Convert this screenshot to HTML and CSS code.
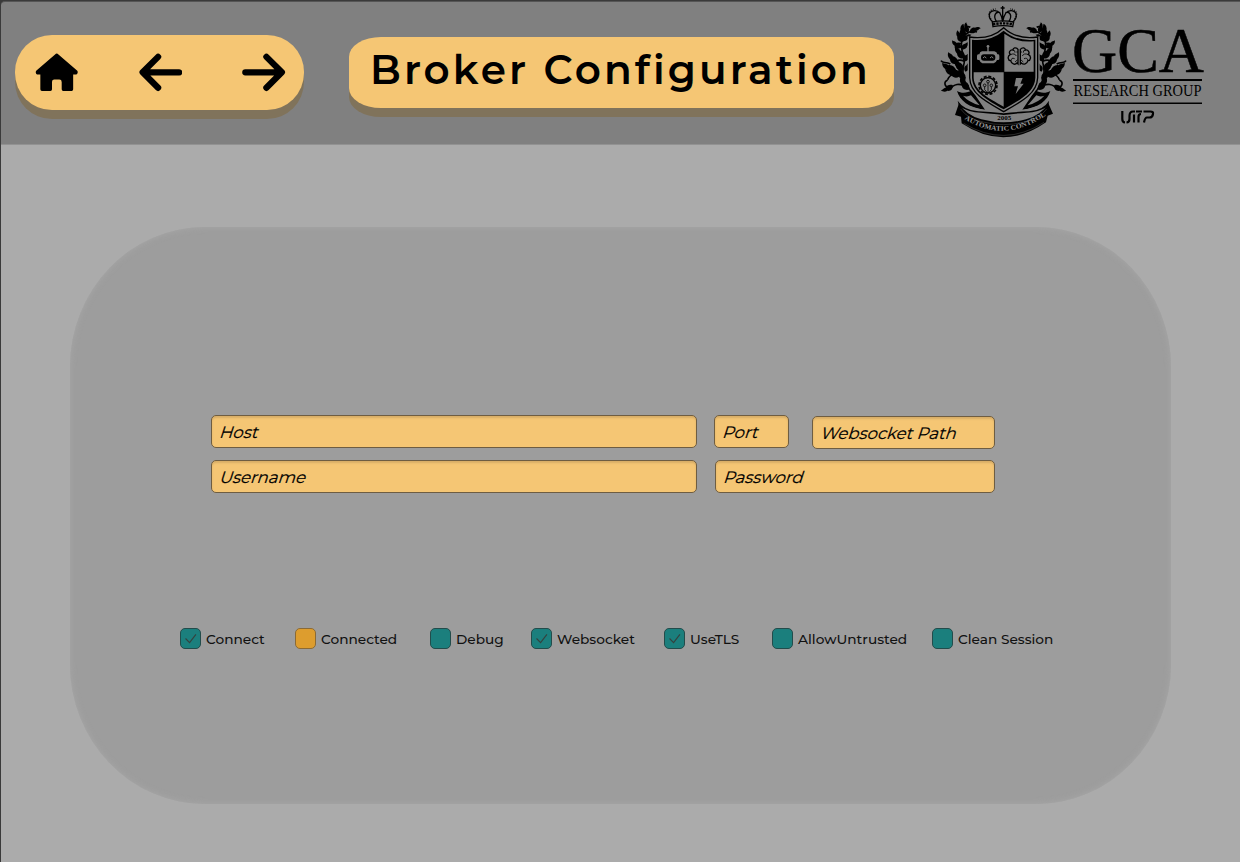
FILE: index.html
```html
<!DOCTYPE html>
<html lang="en">
<head>
<meta charset="utf-8">
<title>Broker Configuration</title>
<link rel="stylesheet" href="styles.css">
</head>
<body>
<div class="app">
<header class="header">
  <nav class="nav">
    <svg class="nav-icon" viewBox="0 0 44 44"><path d="M20.300 4.200Q22 2.600 23.700 4.200L42.500 20.500C44 22 43 24.600 41 24.600H38.600V39.500Q38.600 41.200 37 41.200H28.600Q27 41.200 27 39.500V32Q27 29.600 24.600 29.600H19.500Q17.200 29.600 17.200 32V39.500Q17.200 41.200 15.600 41.200H7Q5.400 41.200 5.400 39.500V24.600H3C1 24.600 0 22 1.500 20.500Z"/></svg>
    <svg class="nav-icon line" viewBox="0 0 44 44"><path d="M40.600 22.300H4M19.300 6.700L3.700 22.300L19.300 38"/></svg>
    <svg class="nav-icon line" viewBox="0 0 44 44"><path d="M3.400 22.300H40M24.700 6.700L40.300 22.300L24.700 38"/></svg>
  </nav>
  <h1 class="title"><span>Broker Configuration</span></h1>
  <svg class="crest" viewBox="0 0 405 435">
    <defs>
      <path id="leaf" d="M0 0C-6 -7 -3 -17 5 -19C8 -24 14 -27 20 -25C16 -21 18 -17 13 -14C13 -6 7 -2 0 0Z"/>
      <path id="motto" d="M88 357Q205 432 330 348"/>
      <g id="wing">
        <path class="stroke s5" d="M112 278C88 253 80 222 86 195C95 170 74 155 80 126C84 104 104 88 126 96M88 184C68 174 54 188 66 199M81 133C61 124 57 142 67 151M93 106C81 92 93 75 106 82M91 235C65 213 44 223 38 239M102 264C73 245 54 253 45 269M38 240C24 246 30 262 41 261M46 192C32 184 23 191 18 182"/>
        <use href="#leaf" transform="translate(85 125) rotate(-65) scale(1.200)"/>
        <use href="#leaf" transform="translate(88 113) rotate(-42) scale(1.300)"/>
        <use href="#leaf" transform="translate(100 98) rotate(-50)"/>
        <use href="#leaf" transform="translate(105 99) rotate(28) scale(1.100)"/>
        <use href="#leaf" transform="translate(84 124) rotate(14)"/>
        <use href="#leaf" transform="translate(80 142) rotate(-92) scale(1.100)"/>
        <use href="#leaf" transform="translate(82 149) rotate(10)"/>
        <use href="#leaf" transform="translate(91 173) rotate(-79) scale(1.400)"/>
        <use href="#leaf" transform="translate(86 185) rotate(8) scale(1.100)"/>
        <use href="#leaf" transform="translate(70 190) rotate(-80) scale(1.400)"/>
        <use href="#leaf" transform="translate(86 210) rotate(-74) scale(1.400)"/>
        <use href="#leaf" transform="translate(64 211) rotate(-100) scale(1.500)"/>
        <use href="#leaf" transform="translate(80 222) rotate(-112) scale(1.600)"/>
        <use href="#leaf" transform="translate(91 240) rotate(-62) scale(1.300)"/>
        <use href="#leaf" transform="translate(92 215) rotate(-8)"/>
        <use href="#leaf" transform="translate(104 268) rotate(-75) scale(1.400)"/>
        <use href="#leaf" transform="translate(53 255) rotate(-153) scale(1.200)"/>
      </g>
    </defs>
    <g class="stroke s4">
      <path d="M174 66C158 54 159 34 178 32C192 31 200 43 203 65C207 43 215 31 229 32C248 34 248 54 233 66M184 64C174 48 181 33 196 38M222 64C232 48 226 33 211 38M203 18V62M197 24H209"/>
      <path stroke-dasharray="3 4" d="M168 57C154 38 168 27 182 27M239 57C253 38 239 27 225 27"/>
      <path d="M172 66Q204 59 236 66L233 80Q204 74 174 80Z"/>
    </g>
    <path class="stroke s7" stroke-dasharray="7 3" d="M174 73Q204 67 234 73"/>
    <use href="#wing"/>
    <use href="#wing" transform="translate(411 0) scale(-1 1)"/>
    <path d="M66 273C75 302 100 323 150 329L124 290L112 270C96 281 78 280 66 273ZM346 273C337 302 312 323 262 329L288 290L300 270C316 281 334 280 346 273Z"/>
    <path class="ground" d="M84 287Q96 292 108 286L134 316Q100 306 84 287ZM328 287Q316 292 304 286L278 316Q312 306 328 287Z"/>
    <path class="ground" d="M95 315Q150 336 206 334Q262 336 317 315L322 340Q255 372 206 372Q157 372 90 340Z"/>
    <path d="M68 302Q86 330 130 334Q165 335 206 340Q247 335 282 334Q326 330 342 302L340 318Q310 338 275 338Q247 340 206 345Q165 340 137 338Q102 338 72 318Z"/>
    <path d="M72 310Q93 346 139 358Q206 376 273 358Q319 346 340 310L354 341L338 347L333 367Q207 455 80 370L78 350L60 345Z"/>
    <path class="stroke glint2" d="M77 327Q98 357 145 366Q206 382 267 366Q314 357 335 327M86 370Q207 444 327 367"/>
    <path class="ground" d="M98 109Q165 121 206 80Q247 121 314 109V234C313 286 259 310 206 340C153 310 99 286 98 234Z"/>
    <path class="stroke s3" d="M104 111Q167 120 206 83Q245 120 308 111V233C306 282 257 306 206 335C155 306 106 282 104 233Z"/>
    <path d="M111 119Q168 125 206 92Q244 125 301 119V233C299 278 253 300 206 328C159 300 113 278 111 233Z"/>
    <path class="ground" d="M208 101Q246 129 296 124V215H208ZM116 217H206V320C159 293 118 273 116 233Z"/>
    <g class="ground">
      <circle cx="159" cy="139" r="4"/><path d="M157 140H161V154H178Q186 155 187 163H190Q193 164 193 168V176Q193 180 189 180H186Q183 188 176 190H142Q136 188 133 180H130Q126 180 126 176V168Q126 164 130 163H133Q134 155 141 154H157Z"/>
      <path d="M243 234H263L256 251H266L242 282L249 259H238Z"/>
    </g>
    <rect x="138" y="163" width="43" height="19" rx="9"/><path class="glint" d="M144 174Q149 166 154 174M165 174Q170 166 175 174"/>
    <g class="stroke s2">
      <path class="s3" d="M249 148C242 140 234 144 234 150C225 148 220 158 226 163C215 169 220 183 227 182C229 192 240 196 246 189L249 192ZM256 148C263 140 271 144 271 150C280 148 285 158 280 163C291 169 286 183 279 182C276 192 266 196 259 189L256 192Z"/>
      <path d="M234 151Q241 150 240 158M226 164Q239 158 244 168M229 181Q228 172 239 176M240 186L248 179M271 151Q264 150 265 158M280 164Q267 158 262 168M278 181Q278 172 267 176M265 186L257 179M249 156H244M257 156H261"/>
      <circle cx="159" cy="256" r="23"/><path d="M159 249V279M149 260V269L156 277M169 260V269L162 277"/><circle cx="159" cy="245" r="4"/><circle cx="149" cy="256" r="4"/><circle cx="169" cy="256" r="4"/>
    </g>
    <circle class="stroke s5" stroke-dasharray="9 5.140" cx="159" cy="256" r="27"/>
    <circle class="stroke s4" cx="159" cy="256" r="23"/>
    <text class="year" x="187" y="359" textLength="42" lengthAdjust="spacingAndGlyphs">2005</text>
    <text class="motto"><textPath href="#motto" textLength="262" lengthAdjust="spacingAndGlyphs">AUTOMATIC CONTROL</textPath></text>
  </svg>
  <svg class="wordmark" viewBox="0 0 150 120">
    <text class="gca" x="7" y="57" textLength="132" lengthAdjust="spacingAndGlyphs">GCA</text>
    <path d="M8 64H137V66H8ZM8 87.500H137V89H8Z"/>
    <text class="group" x="8.500" y="81" textLength="128" lengthAdjust="spacingAndGlyphs">RESEARCH GROUP</text>
    <path class="utp" d="M57.300 96V104Q57.300 107.300 60 107.500M61.500 107.500Q64.500 107.300 64.500 104V101Q64.500 96.500 68 96.500H70M71 96.500H77M69 99.500V107.500M73.500 107.500V102Q73.500 99 76 99M78.500 96.500H85.500Q88.500 96.500 88 99Q87.500 102.500 84.500 102.500H82Q80 102.500 79 107.500"/>
  </svg>
</header>
<main class="main">
  <section class="panel">
    <div class="fields">
      <div class="field host"><span>Host</span></div>
      <div class="field port"><span>Port</span></div>
      <div class="field path"><span>Websocket Path</span></div>
    </div>
    <div class="fields second">
      <div class="field user"><span>Username</span></div>
      <div class="field pass"><span>Password</span></div>
    </div>
    <div class="toggles">
      <div class="toggle"><i class="box"><svg viewBox="0 0 21 21"><path d="M5 10.500L9.500 15L16.500 6"/></svg></i><span>Connect</span></div>
      <div class="toggle"><i class="box amber"></i><span>Connected</span></div>
      <div class="toggle"><i class="box"></i><span>Debug</span></div>
      <div class="toggle"><i class="box"><svg viewBox="0 0 21 21"><path d="M5 10.500L9.500 15L16.500 6"/></svg></i><span>Websocket</span></div>
      <div class="toggle"><i class="box"><svg viewBox="0 0 21 21"><path d="M5 10.500L9.500 15L16.500 6"/></svg></i><span>UseTLS</span></div>
      <div class="toggle"><i class="box"></i><span>AllowUntrusted</span></div>
      <div class="toggle"><i class="box"></i><span>Clean Session</span></div>
    </div>
  </section>
</main>
</div>
</body>
</html>
```
FILE: styles.css
```css
* { box-sizing: border-box; }
body { margin: 0; background: #3a3a3a; font-family: Montserrat, Inter, sans-serif; color: #000; }
.app { width: 1240px; height: 862px; padding: 1px 0 0 1px; overflow: hidden; }
.header { height: 143px; display: flex; align-items: flex-start; background: #808080; border-top: 1px solid #555; border-top-left-radius: 4px; }
.nav { width: 288.500px; height: 75.500px; margin: 32.500px 0 0 14px; padding: 0 18px 0 20px; display: flex; justify-content: space-between; align-items: center; background: #f5c674; border-radius: 37px; box-shadow: 0 9px 0 #80735b; }
.nav-icon { width: 43.500px; height: 44px; }
.line { fill: none; stroke: #000; stroke-width: 6.4; stroke-linecap: round; stroke-linejoin: round; }
.title { width: 544.500px; height: 71px; margin: 34.500px 0 0 45.500px; padding-left: 21px; display: flex; align-items: center; background: #f5c674; border-radius: 32px / 20px; box-shadow: 0 9px 0 #80735b; font-size: 40.500px; font-weight: 600; line-height: 48px; letter-spacing: 3.1px; white-space: nowrap; }
.title span { position: relative; top: -2px; }
.crest { width: 135px; height: 145px; margin: -2px 0 0 41px; flex: none; }
.wordmark { width: 150px; height: 120px; margin: 13px 0 0 -5px; flex: none; }
.ground { fill: #808080; }
.stroke { fill: none; stroke: #000; stroke-linecap: butt; }
.s2 { stroke-width: 2.5; }
.s3 { stroke-width: 4; }
.s4 { stroke-width: 4; }
.s5 { stroke-width: 5; }
.s7 { stroke-width: 7; }
.glint { fill: none; stroke: #808080; stroke-width: 3; }
.glint2 { stroke: #555; stroke-width: 1.5; }
.year { font: bold 18px "Liberation Serif", serif; }
.motto { font: bold 21px "Liberation Serif", serif; fill: #999; }
.gca { font: 63px "Liberation Serif", serif; stroke: #000; stroke-width: .5; }
.group { font: 16px "Liberation Serif", serif; }
.utp { fill: none; stroke: #000; stroke-width: 2.2; }
.main { height: 718px; padding: 82px 0 0 69px; background: #ababab; border-top: 1px solid #929292; }
.panel { width: 1101px; height: 577px; padding-top: 188px; background: #9d9d9d; border-radius: 135px / 140px; box-shadow: inset 0 0 6px #a7a7a7; }
.fields { display: flex; height: 33px; margin-left: 141px; }
.second { margin-top: 12px; }
.field { height: 33px; padding: 1px 0 0 7px; display: flex; align-items: center; flex: none; background: #f5c674; border: 1px solid #6e5d42; border-radius: 5px; box-shadow: inset 0 2px 2px #d8ae67; font-size: 16.500px; white-space: nowrap; }
.field span { transform: skewX(-18deg); transform-origin: 0 75%; -webkit-text-stroke: .2px #000; }
.host, .user { width: 486px; }
.port { width: 75px; margin-left: 17px; }
.path { width: 182.500px; margin: 1px 0 0 23px; }
.pass { width: 280px; margin-left: 18px; }
.toggles { margin: 135px 0 0 110px; display: grid; grid-template-columns: 115px 135px 101px 133px 108px 160px 140px; }
.toggle { display: flex; align-items: center; height: 21px; font-size: 13.700px; font-weight: 500; color: #111; white-space: nowrap; }
.box { width: 21px; height: 21px; margin-right: 5px; flex: none; background: #1b7f7d; border: 1px solid #234c4b; border-radius: 5px; }
.box svg { display: block; width: 19px; height: 19px; }
.box path { fill: none; stroke: #34423f; stroke-width: 1.3; }
.amber { background: #dd9d2e; border-color: #8b6a35; }
```
